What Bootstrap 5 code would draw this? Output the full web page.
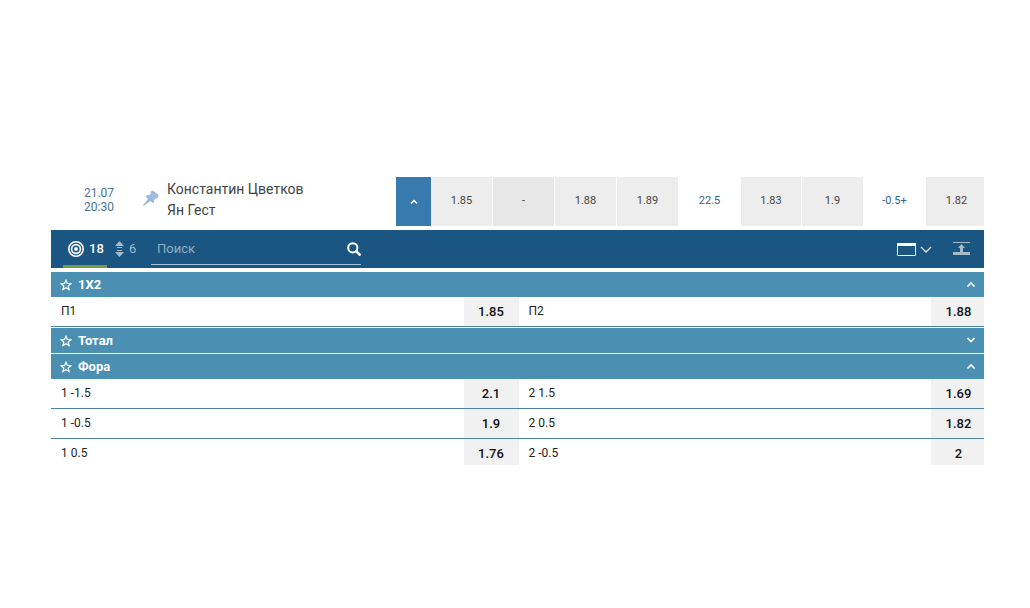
<!DOCTYPE html>
<html lang="ru">
<head>
<meta charset="utf-8">
<meta name="viewport" content="width=device-width, initial-scale=1">
<title>Константин Цветков – Ян Гест</title>
<link href="https://cdn.jsdelivr.net/npm/bootstrap@5.3.0/dist/css/bootstrap.min.css" rel="stylesheet">
<style>
  body { font-family: Roboto, "Liberation Sans", sans-serif; font-size: 12px; line-height: 14px; color: #222; background: #fff; }
  button { font: inherit; color: inherit; background: none; border: 0; padding: 0; }
  svg { display: block; flex: none; }
  .page { padding: 177px 46px 0 51px; }

  .event-row { min-height: 49px; margin-bottom: 4px; }
  .event-date { width: 92px; color: #4a7399; padding: 9px 0 0 4px; }
  .event-pin { width: 24px; padding-top: 13px; }
  .event-names { font-size: 14px; line-height: 21px; color: #444; padding-top: 2px; }
  .event-toggle { width: 35px; background: #397aae; color: #fff; }
  .odd { width: 61px; font-size: 11px; color: #444; background: #ededed; padding-bottom: 2px; }
  .odd + .odd { margin-left: 1px; }
  .odd-empty { background: #e7e7e7; }
  .odd-line { width: 63px; font-size: 11px; color: #2f6591; padding-bottom: 2px; }
  .odd-over { width: 60px; }
  .odd-last { width: 58px; padding-left: 3px; }

  .tools { min-height: 38px; margin-bottom: 4px; padding: 0 14px 0 12px; background: #1a5681; font-size: 13px; color: #fff; }
  .tools-tab { border-bottom: 3px solid #769b45; border-top: 3px solid transparent; width: 44px; padding-left: 5px; font-weight: 500; gap: 5px; }
  .tools-sort { width: 44px; padding-left: 8px; gap: 5px; color: #a3bbcd; }
  .search-line { width: 210px; height: 35px; padding-top: 4px; border-bottom: 1px solid #9cc3e0; }
  .search-line input { font-size: 13px; line-height: 16px; color: #fff; background: none; border: 0; outline: 0; padding: 0 6px; min-width: 0; }
  .search-line input::placeholder { color: #91adc4; opacity: 1; }
  .tools-collapse { margin-left: 21px; color: #a5bac9; }

  .market-head { min-height: 25px; background: #4b90b3; color: #fff; font-size: 13px; padding: 0 8px 0 9px; }
  .market-head .title { margin-left: 6px; font-weight: 700; }
  .market-gap { margin-bottom: 1px; }
  .outcomes { display: grid; grid-template-columns: minmax(0, 1fr) 55px minmax(0, 1fr) 53px; min-height: 30px; border-bottom: 1px solid #4b80a8; }
  .outcomes-end { min-height: 26px; border-bottom: 0; }
  .outcomes .name { padding: 7px 10px 0; }
  .outcomes .price { background: #f1f1f1; color: #111; font-size: 13px; font-weight: 500; padding-top: 8px; line-height: 14px; display: flex; justify-content: center; }
  .outcomes .price:last-child { padding-left: 2px; }
</style>
</head>
<body>
<main class="page">
  <section class="event-row d-flex">
    <div class="event-date text-center flex-shrink-0">21.07<br>20:30</div>
    <button class="event-pin d-flex align-items-start flex-shrink-0" aria-label="Закрепить">
      <svg width="16" height="16" viewBox="0 0 16 16" fill="#9dbbdc"><path d="M7.600 1.800 10 .4 15.600 5 15 8 13 8.200 11.200 10C11.400 11.200 11 12.200 10 13.200L7.500 11 1.200 15.600 0 15.800.4 14.500 5 9 2.600 6.400C3.800 5.300 5 5 6.400 5.100L7.800 4z"/></svg>
    </button>
    <div class="event-names flex-grow-1">Константин Цветков<br>Ян Гест</div>
    <button class="event-toggle d-flex align-items-center justify-content-center" aria-label="Свернуть">
      <svg width="8" height="6" viewBox="0 0 8 6" fill="none" stroke="currentColor" stroke-width="1.5"><path d="M1 4.500 4 1.500l3 3"/></svg>
    </button>
    <button class="odd">1.85</button>
    <button class="odd odd-empty">-</button>
    <button class="odd">1.88</button>
    <button class="odd">1.89</button>
    <span class="odd-line d-flex align-items-center justify-content-center">22.5</span>
    <button class="odd odd-over">1.83</button>
    <button class="odd">1.9</button>
    <span class="odd-line d-flex align-items-center justify-content-center">-0.5+</span>
    <button class="odd odd-last">1.82</button>
  </section>

  <section class="tools d-flex align-items-stretch">
    <button class="tools-tab d-flex align-items-center">
      <svg width="16" height="16" viewBox="0 0 16 16" fill="none" stroke="currentColor" stroke-width="1.600"><circle cx="8" cy="8" r="7.200"/><circle cx="8" cy="8" r="4.400"/><circle cx="8" cy="8" r="1.900" fill="currentColor" stroke="none"/></svg>
      <span>18</span>
    </button>
    <button class="tools-sort d-flex align-items-center">
      <svg width="9" height="16" viewBox="0 0 9 16" fill="currentColor"><path d="M4.500 0 9 5H0zM2 6h5v1H2zM2 9h5v1H2zM0 11h9l-4.500 5z"/></svg>
      <span>6</span>
    </button>
    <form class="search-line d-flex align-items-center" role="search">
      <input class="flex-grow-1" type="search" placeholder="Поиск" aria-label="Поиск">
      <button type="button" aria-label="Найти">
        <svg width="14" height="14" viewBox="0 0 14 14" fill="none" stroke="#fff" stroke-width="2"><circle cx="5.800" cy="5.800" r="4.600"/><path d="m9.200 9.200 3.500 3.500" stroke-width="2.600" stroke-linecap="round"/></svg>
      </button>
    </form>
    <button class="ms-auto d-flex align-items-center" aria-label="Вид">
      <svg width="19" height="13" viewBox="0 0 19 13"><path fill="none" stroke="#eaf6fb" d="M.5.5h18v12H.5z"/><path fill="#fff" d="M0 0h19v3H0z"/></svg>
      <svg class="ms-1" width="12" height="7" viewBox="0 0 12 7" fill="none" stroke="#dcebf3" stroke-width="1.300"><path d="m1 1 5 5 5-5"/></svg>
    </button>
    <button class="tools-collapse d-flex align-items-center" aria-label="Свернуть все">
      <svg width="17" height="14" viewBox="0 0 17 14" fill="currentColor"><path d="M0 0h17v1H0zM8.500 2 12 6h-2v4h7v3H0v-3h7V6H5z"/></svg>
    </button>
  </section>

  <section>
    <div class="market-head d-flex align-items-center">
      <button aria-label="В избранное"><svg width="12" height="12" viewBox="0 0 12 12" fill="none" stroke="currentColor" stroke-width="1.200"><path d="m6 1.200 1.400 3.200 3.500.3-2.700 2.300.9 3.500L6 8.700l-3.100 1.800.9-3.500L1.100 4.700l3.500-.3z"/></svg></button>
      <button class="title d-flex flex-grow-1 align-items-center justify-content-between">1X2 <svg width="10" height="7" viewBox="0 0 10 7" fill="none" stroke="currentColor" stroke-width="1.700"><path d="M1.500 5.500 5 2l3.500 3.500"/></svg></button>
    </div>
    <div class="outcomes market-gap">
      <span class="name">П1</span><button class="price">1.85</button>
      <span class="name">П2</span><button class="price">1.88</button>
    </div>
  </section>

  <section>
    <div class="market-head market-gap d-flex align-items-center">
      <button aria-label="В избранное"><svg width="12" height="12" viewBox="0 0 12 12" fill="none" stroke="currentColor" stroke-width="1.200"><path d="m6 1.200 1.400 3.200 3.500.3-2.700 2.300.9 3.500L6 8.700l-3.100 1.800.9-3.500L1.100 4.700l3.500-.3z"/></svg></button>
      <button class="title d-flex flex-grow-1 align-items-center justify-content-between">Тотал <svg width="10" height="7" viewBox="0 0 10 7" fill="none" stroke="currentColor" stroke-width="1.700"><path d="M1.500 1 5 4.500 8.500 1"/></svg></button>
    </div>
  </section>

  <section>
    <div class="market-head d-flex align-items-center">
      <button aria-label="В избранное"><svg width="12" height="12" viewBox="0 0 12 12" fill="none" stroke="currentColor" stroke-width="1.200"><path d="m6 1.200 1.400 3.200 3.500.3-2.700 2.300.9 3.500L6 8.700l-3.100 1.800.9-3.500L1.100 4.700l3.500-.3z"/></svg></button>
      <button class="title d-flex flex-grow-1 align-items-center justify-content-between">Фора <svg width="10" height="7" viewBox="0 0 10 7" fill="none" stroke="currentColor" stroke-width="1.700"><path d="M1.500 5.500 5 2l3.500 3.500"/></svg></button>
    </div>
    <div class="outcomes">
      <span class="name">1 -1.5</span><button class="price">2.1</button>
      <span class="name">2 1.5</span><button class="price">1.69</button>
    </div>
    <div class="outcomes">
      <span class="name">1 -0.5</span><button class="price">1.9</button>
      <span class="name">2 0.5</span><button class="price">1.82</button>
    </div>
    <div class="outcomes outcomes-end">
      <span class="name">1 0.5</span><button class="price">1.76</button>
      <span class="name">2 -0.5</span><button class="price">2</button>
    </div>
  </section>
</main>
<script src="https://cdn.jsdelivr.net/npm/bootstrap@5.3.0/dist/js/bootstrap.bundle.min.js"></script>
</body>
</html>
